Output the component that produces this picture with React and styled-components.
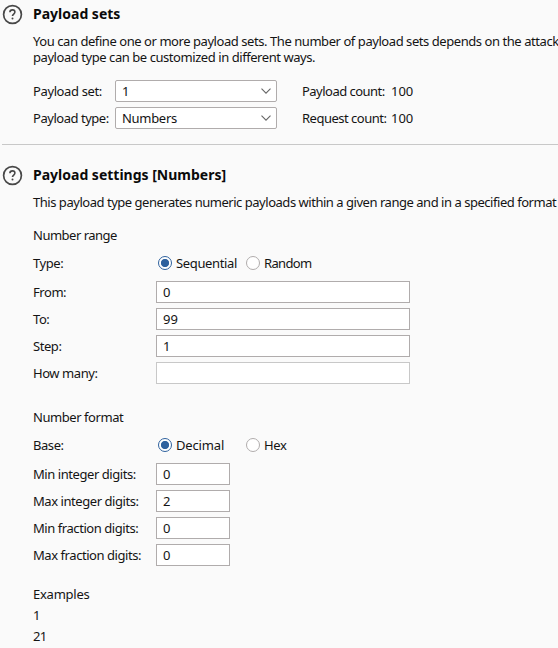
import React, { useState } from "react";
import styled, { createGlobalStyle } from "styled-components";

const GlobalStyle = createGlobalStyle`
  * { box-sizing: border-box; }
  body {
    margin: 0;
    background: #fafafa;
    color: #141414;
    font-family: "Noto Sans", "Open Sans", sans-serif;
    font-size: 13px;
    line-height: 16px;
    overflow: hidden;
  }
`;

const Page = styled.main`
  width: 558px;
  height: 648px;
  overflow: hidden;
  background: #fafafa;
`;

const Section = styled.section`
  display: grid;
  grid-template-columns: 33px 1fr;
  height: ${(p) => p.$height || "auto"};
  padding-top: ${(p) => p.$top}px;
`;

const Divider = styled.hr`
  height: 1px;
  margin: 0 0 0 2px;
  border: 0;
  background: #c8c8c8;
`;

const HelpSvg = styled.svg`
  display: block;
  margin: 0 0 0 2px;
`;

const Content = styled.div`
  min-width: 0;
`;

const Title = styled.h2`
  margin: 0;
  height: 20px;
  font-size: 14px;
  line-height: 20px;
  font-weight: 700;
  color: #0a0a0a;
  white-space: nowrap;
`;

const Description = styled.p`
  margin: 9px 0 0;
  white-space: nowrap;
`;

const Line = styled.span`
  display: block;
  letter-spacing: ${(p) => p.$track ?? -0.44}px;
`;

const Text = styled.span`
  white-space: nowrap;
  letter-spacing: ${(p) => p.$track ?? -0.44}px;
`;

const SetGrid = styled.div`
  display: grid;
  grid-template-columns: 82px 162px 25px 1fr;
  grid-auto-rows: 22px;
  row-gap: 5px;
  align-items: center;
  margin-top: 15px;
`;

const Count = styled.span`
  grid-column: 4;
  display: grid;
  grid-template-columns: 89px auto;
  justify-content: start;
`;

const SelectBox = styled.button`
  display: flex;
  align-items: center;
  justify-content: space-between;
  width: 162px;
  height: 22px;
  padding: 0 5px 0 6px;
  border: 1px solid #b0acac;
  border-radius: 2px;
  background: #fff;
  color: inherit;
  font: inherit;
`;

const Heading = styled.h3`
  margin: ${(p) => p.$top}px 0 0;
  height: 16px;
  font: inherit;
  white-space: nowrap;
`;

const RadioRow = styled.div`
  display: grid;
  grid-template-columns: 125px 88px auto;
  align-items: center;
  height: 16px;
  margin-top: 12px;
  justify-content: start;
`;

const RadioLabel = styled.label`
  display: flex;
  align-items: center;
  gap: 4px;
`;

const Radio = styled.input`
  appearance: none;
  width: 14px;
  height: 14px;
  margin: 0;
  border: 1px solid #b0acac;
  border-radius: 50%;
  background: #fff;
  &:checked {
    border: 1.5px solid #2e619e;
    background: radial-gradient(circle, #2e619e 3.7px, #fff 4.5px);
  }
`;

const Fields = styled.div`
  display: grid;
  grid-template-columns: 123px auto;
  grid-auto-rows: 22px;
  row-gap: 5px;
  align-items: center;
  justify-content: start;
  margin-top: 10px;
`;

const Field = styled.input`
  display: block;
  width: ${(p) => p.$width}px;
  height: 22px;
  padding: 0 6px 1px;
  border: 1px solid #b0acac;
  border-radius: 0;
  background: #fff;
  color: #141414;
  font: inherit;
  outline: 0;
  &:disabled { border-color: #c8c8c8; }
`;

const Examples = styled.div`
  display: grid;
  grid-auto-rows: 21px;
  margin-top: 17px;
  align-items: center;
`;

const tracking = {
  "Payload set:": -0.38,
  "Payload type:": -0.47,
  "Payload count:": -0.52,
  "Request count:": -0.5,
  "Number range": -0.5,
  Numbers: -0.3,
  Sequential: -0.36,
  Random: -0.65,
  Decimal: -0.15,
  Hex: -0.3,
  Examples: -0.25,
  "21": -0.8,
};

function HelpIcon() {
  return (
    <HelpSvg width="21" height="21" viewBox="0 0 21 21" fill="none" stroke="#484848">
      <circle cx="10.5" cy="10.5" r="8.9" strokeWidth="1.7" />
      <path d="M7.9 8.3C7.9 6.8 9 5.9 10.5 5.9s2.4 .9 2.4 2.2c0 1.9-2.4 2.1-2.4 4" strokeWidth="1.6" />
      <circle cx="10.5" cy="14.4" r="1" fill="#484848" stroke="none" />
    </HelpSvg>
  );
}

function Label({ children }) {
  return <Text $track={tracking[children]}>{children}</Text>;
}

function Select({ value }) {
  return (
    <SelectBox type="button">
      <Label>{value}</Label>
      <svg width="10" height="6" viewBox="0 0 10 6" fill="none" stroke="#666" strokeWidth="1.1">
        <path d="M.5.6 5 5.1 9.5.6" />
      </svg>
    </SelectBox>
  );
}

function Radios({ label, name, options }) {
  const [value, setValue] = useState(options[0]);
  return (
    <RadioRow>
      <Label>{label}</Label>
      {options.map((o) => (
        <RadioLabel key={o}>
          <Radio type="radio" name={name} checked={value === o} onChange={() => setValue(o)} />
          <Label>{o}</Label>
        </RadioLabel>
      ))}
    </RadioRow>
  );
}

function FieldGroup({ rows, width }) {
  return (
    <Fields>
      {rows.map(([label, value, disabled]) => (
        <React.Fragment key={label}>
          <Label>{label}</Label>
          <Field $width={width} defaultValue={value} disabled={disabled} aria-label={label} />
        </React.Fragment>
      ))}
    </Fields>
  );
}

export default function App() {
  return (
    <Page>
      <GlobalStyle />
      <Section $top={4} $height="144px">
        <HelpIcon />
        <Content>
          <Title>Payload sets</Title>
          <Description>
            <Line>You can define one or more payload sets. The number of payload sets depends on the attack</Line>
            <Line>payload type can be customized in different ways.</Line>
          </Description>
          <SetGrid>
            <Label>Payload set:</Label>
            <Select value="1" />
            <Count><Label>Payload count:</Label><Text $track={0}>100</Text></Count>
            <Label>Payload type:</Label>
            <Select value="Numbers" />
            <Count><Label>Request count:</Label><Text $track={0}>100</Text></Count>
          </SetGrid>
        </Content>
      </Section>
      <Divider />
      <Section $top={20}>
        <HelpIcon />
        <Content>
          <Title>Payload settings [Numbers]</Title>
          <Description>
            <Line $track={-0.47}>This payload type generates numeric payloads within a given range and in a specified format</Line>
          </Description>
          <Heading $top={17}><Label>Number range</Label></Heading>
          <Radios label="Type:" name="type" options={["Sequential", "Random"]} />
          <FieldGroup width={254} rows={[["From:", "0"], ["To:", "99"], ["Step:", "1"], ["How many:", "", true]]} />
          <Heading $top={25}><Label>Number format</Label></Heading>
          <Radios label="Base:" name="base" options={["Decimal", "Hex"]} />
          <FieldGroup width={74} rows={[["Min integer digits:", "0"], ["Max integer digits:", "2"], ["Min fraction digits:", "0"], ["Max fraction digits:", "0"]]} />
          <Examples>
            <Label>Examples</Label>
            <Label>1</Label>
            <Label>21</Label>
          </Examples>
        </Content>
      </Section>
    </Page>
  );
}
